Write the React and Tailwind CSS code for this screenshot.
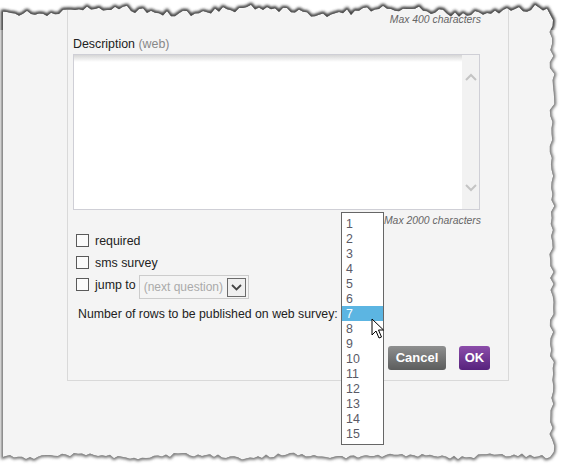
import React from "react";

function mulberry32(a) {
  return function () {
    a |= 0;
    a = (a + 0x6d2b79f5) | 0;
    let t = Math.imul(a ^ (a >>> 15), 1 | a);
    t = (t + Math.imul(t ^ (t >>> 7), 61 | t)) ^ t;
    return ((t ^ (t >>> 14)) >>> 0) / 4294967296;
  };
}

function buildTorn() {
  const r = mulberry32(11);
  const pts = [];
  for (let x = 3; x <= 550; x += 4) {
    pts.push([x, 11 + 3 * Math.sin(x / 23) + (r() - 0.5) * 7]);
  }
  for (let y = 20; y <= 452; y += 6) {
    pts.push([552 + (r() - 0.5) * 5, y]);
  }
  for (let x = 550; x >= 5; x -= 4) {
    pts.push([x, 456 + 1.5 * Math.sin(x / 17) + (r() - 0.5) * 4]);
  }
  pts.push([3, 457]);
  return "M" + pts.map((p) => p[0].toFixed(1) + " " + p[1].toFixed(1)).join(" L") + " Z";
}

const TORN = buildTorn();

function TornOverlay() {
  const outer = "M0 0 H566 V465 H0 Z ";
  return (
    <svg
      className="absolute inset-0 pointer-events-none"
      width="566"
      height="465"
      viewBox="0 0 566 465"
    >
      <defs>
        <clipPath id="outside">
          <path d={outer + TORN} clipRule="evenodd" />
        </clipPath>
        <clipPath id="topband">
          <rect x="0" y="0" width="566" height="30" />
        </clipPath>
        <filter id="soft" x="-10%" y="-10%" width="120%" height="120%">
          <feGaussianBlur stdDeviation="1.6" />
        </filter>
      </defs>
      <path d={outer + TORN} fill="#ffffff" fillRule="evenodd" />
      <g clipPath="url(#outside)">
        <path d={TORN} fill="none" stroke="#6a6a6a" strokeWidth="3.5" filter="url(#soft)" />
        <path d={TORN} fill="none" stroke="#8a8a8a" strokeWidth="1" />
        <g clipPath="url(#topband)">
          <path d={TORN} fill="none" stroke="#333" strokeWidth="2.5" filter="url(#soft)" />
        </g>
      </g>
    </svg>
  );
}

function Checkbox() {
  return <div className="w-[13px] h-[13px] border border-[#5a5a5a] bg-[#fbfbfb] shrink-0" />;
}

export default function App() {
  const items = Array.from({ length: 15 }, (_, i) => i + 1);
  return (
    <div
      className="relative w-[566px] h-[465px] overflow-hidden bg-[#f4f4f4] text-[#222]"
      style={{ fontFamily: '"Liberation Sans", Arial, sans-serif' }}
    >
      <div className="ml-[67px] w-[442px] h-[381px] border-x border-b border-[#d9d9d9] bg-[#f4f4f4]">
        <div className="pl-[5px] flex flex-col">
          <div className="h-[14px]" />
          <div className="w-[408px] text-right text-[10.4px] leading-[12px] italic text-[#666]">
            Max 400 characters
          </div>
          <div className="mt-[11px] text-[12.4px] leading-[14px]">
            Description <span className="text-[#888]">(web)</span>
          </div>
          <div className="mt-[3px] w-[407px] h-[156px] border border-[#cfcfd6] bg-white flex">
            <div className="flex-1">
              <div className="h-[7px] bg-linear-to-b from-[#d6d6d6] to-white" />
            </div>
            <div className="w-[17px] bg-[#f2f2f2] flex flex-col items-center justify-between pt-[18px] pb-[17px]">
              <svg width="12" height="8" viewBox="0 0 12 8">
                <path d="M1 7 L6 2 L11 7" fill="none" stroke="#c4c4c4" strokeWidth="2" />
              </svg>
              <svg width="12" height="8" viewBox="0 0 12 8">
                <path d="M1 1 L6 6 L11 1" fill="none" stroke="#c4c4c4" strokeWidth="2" />
              </svg>
            </div>
          </div>
          <div className="mt-[5px] w-[408px] text-right text-[10.4px] leading-[12px] italic text-[#666]">
            Max 2000 characters
          </div>
          <div className="mt-[2px] ml-[3px] h-[22px] flex items-center gap-[6px]">
            <Checkbox />
            <span className="pt-[2px] text-[12.4px] leading-[14px]">required</span>
          </div>
          <div className="ml-[3px] h-[22px] flex items-center gap-[6px]">
            <Checkbox />
            <span className="pt-[2px] text-[12.4px] leading-[14px]">sms survey</span>
          </div>
          <div className="ml-[3px] h-[26px] flex items-start">
            <div className="mt-[5px]">
              <Checkbox />
            </div>
            <span className="ml-[6px] mt-[5px] text-[12.4px] leading-[14px]">jump to</span>
            <div className="ml-[3px] mt-[2px] w-[110px] h-[24px] border border-[#cccccc] bg-[#f4f4f4] flex items-center pl-[4px] pr-[2px]">
              <span className="flex-1 text-[12px] leading-[14px] text-[#aaaaaa]">(next question)</span>
              <div className="w-[19px] h-[19px] border border-[#6b6b6b] bg-[#efefef] flex items-center justify-center">
                <svg width="11" height="7" viewBox="0 0 11 7">
                  <path d="M1 1 L5.5 5.5 L10 1" fill="none" stroke="#444" strokeWidth="1.8" />
                </svg>
              </div>
            </div>
          </div>
          <div className="mt-[8px] ml-[5px] text-[12.3px] leading-[14px]">
            Number of rows to be published on web survey:
          </div>
          <div className="mt-[25px] w-[417px] flex justify-end gap-[13px]">
            <div className="w-[58px] h-[24px] rounded-[3px] bg-linear-to-b from-[#8e8f8f] to-[#5c5d5d] text-white font-bold text-[13px] flex items-center justify-center">
              Cancel
            </div>
            <div className="w-[31px] h-[24px] rounded-[3px] bg-linear-to-b from-[#8c4daa] to-[#57227d] text-white font-bold text-[13px] flex items-center justify-center">
              OK
            </div>
          </div>
        </div>
      </div>

      <div className="absolute left-[341px] top-[212px] w-[43px] h-[233px] border border-[#666] bg-white pt-[3px]">
        {items.map((n) => (
          <div
            key={n}
            className={
              n === 7
                ? "h-[15px] pl-[4px] pt-[1px] text-[12.4px] leading-[14px] bg-[#5cb5e2] text-white"
                : "h-[15px] pl-[4px] pt-[1px] text-[12.4px] leading-[14px] text-[#5a5a66]"
            }
          >
            {n}
          </div>
        ))}
      </div>

      <svg className="absolute left-[371px] top-[318px]" width="14" height="22" viewBox="0 0 14 22">
        <path
          d="M1 1 L1 17 L5 13 L8 20 L10.5 19 L7.5 12 L12.5 12 Z"
          fill="#fff"
          stroke="#000"
          strokeWidth="1"
          strokeLinejoin="miter"
        />
      </svg>

      <TornOverlay />
    </div>
  );
}
